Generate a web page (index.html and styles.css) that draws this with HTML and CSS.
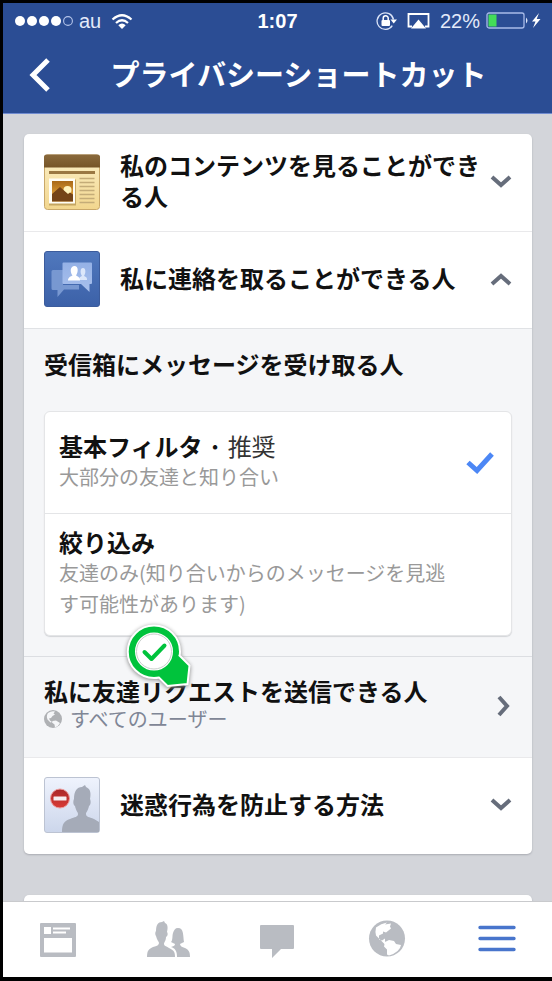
FILE: index.html
```html
<!DOCTYPE html>
<html lang="ja">
<head>
<meta charset="utf-8">
<meta name="viewport" content="width=device-width, initial-scale=1">
<title>プライバシーショートカット</title>
<link rel="stylesheet" href="styles.css">
</head>
<body>
<div class="phone">
  <header class="header">
    <div class="status">
      <div class="status-side">
        <svg width="60" height="12" viewBox="0 0 60 12" aria-hidden="true">
          <g fill="#fff"><circle cx="7" cy="6" r="5"/><circle cx="19" cy="6" r="5"/><circle cx="31" cy="6" r="5"/><circle cx="43" cy="6" r="5"/></g>
          <circle cx="55" cy="6" r="4.4" fill="none" stroke="#b4c4ea" stroke-width="1.1"/>
        </svg>
        <span>au</span>
        <svg class="wifi" width="22" height="17" viewBox="0 0 22 17" fill="none" stroke="#fff" stroke-width="2.2" aria-hidden="true">
          <path d="M1.5 6.5Q11-2 20.500 6.500"/><path d="M5 10Q11 4.500 17 10"/><path d="M11 16L7.300 12.200Q11 9 14.700 12.200Z" fill="#fff" stroke="none"/>
        </svg>
      </div>
      <time class="clock">1:07</time>
      <div class="status-side status-right">
        <svg class="lock" width="21" height="20" viewBox="0 0 21 20" aria-hidden="true">
          <path d="M16.300 14.700A8.300 8.300 0 1 1 17.500 8.500" fill="none" stroke="#dbe4f8" stroke-width="1.300"/>
          <path d="M14.500 8.500h6.500l-3.300 4z" fill="#fff"/>
          <rect x="5.500" y="9" width="8.500" height="6" rx="1" fill="#fff"/>
          <path d="M7.200 9V7.200a2.500 2.500 0 0 1 5 0V9" fill="none" stroke="#fff" stroke-width="1.500"/>
        </svg>
        <svg class="airplay" width="23" height="18" viewBox="0 0 23 18" aria-hidden="true">
          <path d="M5 14.500H1.500V2h20v12.500H18" fill="none" stroke="#fff" stroke-width="1.800"/><path d="M11.500 7.500L19 16.500H4Z" fill="#fff"/>
        </svg>
        <span>22%</span>
        <svg class="battery" width="56" height="18" viewBox="0 0 56 18" aria-hidden="true">
          <rect x="1" y="1" width="37" height="15" rx="2" fill="none" stroke="#a9bbe8" stroke-width="1.300"/>
          <rect x="2.500" y="2.500" width="8" height="12" fill="#43dc58"/>
          <path d="M40 5.500q3 3 0 6z" fill="#dbe4f8"/>
          <path d="M53 1l-7 8.500h3.500L47 16l7.500-9h-3.800z" fill="#fff"/>
        </svg>
      </div>
    </div>
    <div class="titlebar">
      <button class="back" type="button" aria-label="戻る">
        <svg width="24" height="36" viewBox="0 0 24 36"><path d="M21 3L6 18l15 15" fill="none" stroke="#fff" stroke-width="5"/></svg>
      </button>
      <h1>プライバシーショートカット</h1>
    </div>
  </header>

  <main class="content">
    <section class="card">
      <button class="row" type="button" aria-expanded="false">
        <svg class="tile" viewBox="0 0 56 56" aria-hidden="true">
          <defs>
            <linearGradient id="paper" x2="0" y2="1"><stop stop-color="#fbefc6"/><stop offset="1" stop-color="#f2d68e"/></linearGradient>
            <linearGradient id="bar" x2="0" y2="1"><stop stop-color="#8a6a3d"/><stop offset="1" stop-color="#765427"/></linearGradient>
            <linearGradient id="sky" x2="0" y2="1"><stop stop-color="#a96918"/><stop offset="1" stop-color="#f5b645"/></linearGradient>
          </defs>
          <rect x=".5" y="1" width="55" height="54.500" rx="3" fill="url(#paper)" stroke="#c9a86a"/>
          <path d="M0 13.500V3q0-2.500 2.500-2.500h51Q56 .5 56 3v10.500z" fill="url(#bar)"/>
          <path d="M5 18.500h46" stroke="#9a7843" stroke-width="3"/>
          <rect x="5" y="25.500" width="27" height="26" fill="#c5a661"/>
          <rect x="5" y="24.500" width="26" height="25" fill="#fffdf5"/>
          <rect x="8" y="27" width="21" height="20.500" fill="url(#sky)"/>
          <circle cx="23.500" cy="36" r="4" fill="#fff3bd"/>
          <path d="M8 40l8-7 8 7 2-1.500 3 2v7H8z" fill="#754418"/>
          <path d="M35.500 24.500h15M35.500 28.500h15M35.500 32.500h15M35.500 36.500h15M35.500 40.500h15M35.500 44.500h15M35.500 48.500h15" stroke="#c4ac78" stroke-width="1.500"/>
        </svg>
        <span class="row-text">私のコンテンツを見ることができる人</span>
        <svg class="chevron" viewBox="0 0 22 22" aria-hidden="true"><path d="M2 6l9 8 9-8"/></svg>
      </button>

      <button class="row" type="button" aria-expanded="true">
        <svg class="tile" viewBox="0 0 56 56" aria-hidden="true">
          <defs>
            <linearGradient id="blue" x2="0" y2="1"><stop stop-color="#5078bd"/><stop offset="1" stop-color="#3c61a8"/></linearGradient>
            <linearGradient id="bubble" x2="0" y2="1"><stop stop-color="#94b1e6"/><stop offset="1" stop-color="#a9c0ec"/></linearGradient>
          </defs>
          <rect x=".5" y=".5" width="55" height="55" rx="2.500" fill="url(#blue)" stroke="#3c5c9c"/>
          <path d="M9 19h10v15h16v4.500H20L13.500 46v-7H9q-1.500 0-1.500-1.500v-17Q7.500 19 9 19z" fill="#7898d1"/>
          <path d="M19.500 11.500H47q1 0 1 1V32q0 1-1 1h-1.500v8L37 33H19.500q-1 0-1-1V12.500q0-1 1-1z" fill="url(#bubble)"/>
          <path d="M35 29c0-3 1-3 3-4-2-3-2-8 1-8s3 5 1 8c2 1 3 1 3 4z" fill="#dce7fa"/>
          <path d="M24 29.500c0-3.500 3-4 4.500-5-3-4-2-9.500 2-9.500s4 6 1.500 9.500c1.500 1 4 1.500 4 5z" fill="#fff"/>
        </svg>
        <span class="row-text">私に連絡を取ることができる人</span>
        <svg class="chevron" viewBox="0 0 22 22" aria-hidden="true"><path d="M2 16l9-8 9 8"/></svg>
      </button>

      <fieldset class="panel">
        <legend>受信箱にメッセージを受け取る人</legend>
        <div class="options">
          <label class="option">
            <span class="option-text">
              <span class="option-title">基本フィルタ · <span class="hint">推奨</span></span>
              <span class="note">大部分の友達と知り合い</span>
            </span>
            <input type="radio" name="filter" checked>
            <svg class="check" viewBox="0 0 28 22" aria-hidden="true"><path d="M2 10.500l9 8L26 2"/></svg>
          </label>
          <label class="option">
            <span class="option-text">
              <span class="option-title">絞り込み</span>
              <span class="note">友達のみ(知り合いからのメッセージを見逃す可能性があります)</span>
            </span>
            <input type="radio" name="filter">
            <svg class="check" viewBox="0 0 28 22" aria-hidden="true"><path d="M2 10.500l9 8L26 2"/></svg>
          </label>
        </div>
      </fieldset>

      <button class="row request" type="button">
        <span class="request-text">
          <span class="request-title">私に友達リクエストを送信できる人</span>
          <span class="audience">
            <svg width="18" height="18" viewBox="0 0 36 36" aria-hidden="true">
              <circle cx="18" cy="18" r="18" fill="#afb1b4"/>
              <path d="M8 6q7-5 14-3l-3 4 3 2-5 3-3 4-4 1 2 4 4 3-3 1-6-6q-3-7 1-13z" fill="#f5f6f8"/>
              <path d="M17 22l7-1 8 5q-3 7-10 9l-1-6-5-4z" fill="#f5f6f8"/>
            </svg>
            すべてのユーザー
          </span>
        </span>
        <svg class="chevron" viewBox="0 0 22 22" aria-hidden="true"><path d="M9 2l8 9-8 9"/></svg>
        <svg class="marker" viewBox="0 0 68 68" aria-hidden="true">
          <path d="M30 3.500a26 26 0 0 1 26 26q0 3-.5 4l10 10-2 18.500-20 2-8.500-8.500q-2 .5-5 .5a26.200 26.200 0 0 1 0-52.500z" fill="#00c33c" stroke="#fff" stroke-width="2"/>
          <circle cx="30" cy="29.500" r="18" fill="#fff" stroke="#fff" stroke-width="2"/>
          <circle cx="30" cy="29.500" r="17.500" fill="#fff" stroke="#c9cfcc"/>
          <path d="M20.500 30l7 7 13-13.500" fill="none" stroke="#00c33c" stroke-width="4" stroke-linecap="round" stroke-linejoin="round"/>
        </svg>
      </button>

      <button class="row" type="button" aria-expanded="false">
        <svg class="tile" viewBox="0 0 56 56" aria-hidden="true">
          <defs>
            <linearGradient id="pale" x2="0" y2="1"><stop stop-color="#eff3fd"/><stop offset="1" stop-color="#ccd6eb"/></linearGradient>
            <linearGradient id="red" x2="0" y2="1"><stop stop-color="#a92828"/><stop offset="1" stop-color="#d93b36"/></linearGradient>
          </defs>
          <rect x=".5" y=".5" width="55" height="55" rx="2.500" fill="url(#pale)" stroke="#bcc3d2"/>
          <path d="M18 55c0-8 2-11 8-13 5-2 8-2 8-5 0-2-2-3-3-8-2-1-2-5-1-7 0-8 3-12 8-12l3-2 1 2c5 2 5 7 4 12 1 2 1 6-1 7-1 5-3 6-3 8 0 3 3 3 8 5l5 3v10z" fill="#a5abb8"/>
          <circle cx="16" cy="21.500" r="9.500" fill="url(#red)" stroke="#ec9c9c"/>
          <rect x="9.500" y="19.500" width="13" height="4" rx=".5" fill="#f5eef0"/>
        </svg>
        <span class="row-text">迷惑行為を防止する方法</span>
        <svg class="chevron" viewBox="0 0 22 22" aria-hidden="true"><path d="M2 6l9 8 9-8"/></svg>
      </button>
    </section>
    <section class="card next"></section>
  </main>

  <nav class="tabs">
    <a href="#feed" aria-label="ニュースフィード">
      <svg viewBox="0 0 44 44"><path fill-rule="evenodd" d="M5 5h34q1 0 1 1v32q0 1-1 1H5q-1 0-1-1V6q0-1 1-1zM8 9v7h7V9zM17 9.500v2h17v-2zM17 13.500v2h13v-2zM8 20v14.500h28V20z"/></svg>
    </a>
    <a href="#friends" aria-label="友達">
      <svg viewBox="0 0 44 44"><path d="M1 39c0-7 2-8 6-10 4-1 6-2 6-4 0-1-2-3-3-7-1-1-1-4 0-5 0-6 2-9 6-9l2-1 1 2c3 1 3 5 2 9 1 1 1 4-1 5 0 4-2 5-2 7 0 2 2 2 5 4 4 2 6 3 6 9z"/><path d="M31 39c0-6-2-9-6-10 2-1 4-1 4-3l-4-2c2-2 1-6 2-9s2-5 5-5c6 0 5 8 6 14l-4 2c0 2 2 3 5 4 4 2 5 4 5 9z"/></svg>
    </a>
    <a href="#messages" aria-label="メッセージ">
      <svg viewBox="0 0 44 44"><path d="M6 7h32q1 0 1 1v22q0 1-1 1H26l-9 9v-9H6q-1 0-1-1V8q0-1 1-1z"/></svg>
    </a>
    <a href="#notifications" aria-label="お知らせ">
      <svg viewBox="0 0 44 44"><circle cx="22" cy="20.500" r="18"/><path fill="#fff" d="M11 9.500q5-4 11-5l-2 2 6-1-1 3 1 2-5 4-3-1 0 2-4 2 0 4 3 1 3-2 0 3 2 2-2 1-5-5-4-4q-1-4 0-8z"/><path fill="#fff" d="M20 24l4-2 5 1 2 3 5 1q-1 7-12 10.500l-2-1 0-5-3-3z"/></svg>
    </a>
    <a class="active" href="#more" aria-label="その他" aria-current="page">
      <svg viewBox="0 0 44 44"><path d="M5 9.500h34M5 20.500h34M5 31.500h34" stroke="#4875cc" stroke-width="3.400" stroke-linecap="round"/></svg>
    </a>
  </nav>
</div>
</body>
</html>
```
FILE: styles.css
```css
* { box-sizing: border-box; }

body {
  margin: 0;
  background: #000;
  color: #111;
  font-family: "Noto Sans CJK JP", sans-serif;
  font-size: 24px;
}

button {
  margin: 0;
  border: 0;
  background: none;
  color: inherit;
  font: inherit;
  text-align: left;
}

svg { display: block; flex: none; }

.phone {
  display: flex;
  flex-direction: column;
  height: 100vh;
  padding: 3px 0 4px 3px;
}

/* Header */
.header {
  flex: none;
  background: #2b4d94;
  border-bottom: 1px solid #6f8bd0;
  color: #fff;
}

.status {
  display: grid;
  grid-template-columns: 1fr auto 1fr;
  align-items: center;
  height: 36px;
  padding: 0 10px;
  font: 20px/24px "Liberation Sans", sans-serif;
  color: #e3eafa;
}

.status-side { display: flex; align-items: center; gap: 6px; }
.status-side .wifi { margin-left: 4px; }
.status-right { justify-content: flex-end; }
.status-right .airplay { margin: 0 4px; }
.clock { color: #fff; font-weight: bold; }

.titlebar {
  display: grid;
  grid-template-columns: 72px 1fr 30px;
  align-items: center;
  height: 74px;
  padding-bottom: 2px;
}

.back { padding: 0 24px; cursor: pointer; }

h1 {
  margin: 0;
  padding-bottom: 4px;
  font-size: 29px;
  line-height: 40px;
  font-weight: 700;
  text-align: center;
  white-space: nowrap;
}

/* Cards */
.content {
  flex: 1;
  min-height: 0;
  overflow: hidden;
  padding: 20px 20px 0 21px;
  background: #d3d5da;
}

.card {
  margin-bottom: 41px;
  border-radius: 5px;
  background: #fff;
  box-shadow: 0 1px 2px #a9abb2;
}

.next { min-height: 97px; }

.row {
  position: relative;
  display: flex;
  align-items: center;
  width: 100%;
  min-height: 97px;
  padding: 13px 20px 15px;
  font-weight: 700;
  line-height: 31px;
  cursor: pointer;
}

.row + .row { border-top: 1px solid #e9e9eb; }

.tile { width: 56px; height: 56px; margin-right: 20px; }
.row-text { flex: 1; padding-bottom: 4px; }

.chevron {
  width: 22px;
  height: 22px;
  fill: none;
  stroke: #666d7b;
  stroke-width: 4;
}

.panel {
  min-width: 0;
  margin: 0;
  padding: 19px 20px 20px;
  border: 0;
  border-top: 1px solid #e0e2e5;
  background: #f5f6f8;
}

.panel legend {
  float: left;
  width: 100%;
  margin-bottom: 31px;
  padding: 0;
  font-weight: 700;
  line-height: 32px;
}

.options {
  clear: both;
  border: 1px solid #e4e5e7;
  border-radius: 6px;
  background: #fff;
  box-shadow: 0 1px 1px #d3d5d8;
}

.option {
  display: flex;
  align-items: center;
  min-height: 101px;
  padding: 12px 17px 12px 14px;
  line-height: 31px;
  cursor: pointer;
}

.option + .option { border-top: 1px solid #e4e5e7; }
.option-text { flex: 1; padding-bottom: 4px; }
.option-title { display: block; font-weight: 700; }
.hint { font-weight: 400; color: #333; }
.note { display: block; padding-right: 10px; color: #999; font-size: 20px; }

.option input {
  appearance: none;
  width: 0;
  height: 0;
  margin: 0;
}

.check {
  visibility: hidden;
  width: 28px;
  height: 22px;
  fill: none;
  stroke: #4c87f5;
  stroke-width: 5;
}

.option input:checked + .check { visibility: visible; }

.request {
  min-height: 101px;
  border-top: 1px solid #dcdee2;
  background: #f5f6f8;
  line-height: 28px;
}

.request-text { flex: 1; padding-bottom: 2px; }
.request-title { display: block; }

.audience {
  display: flex;
  align-items: center;
  gap: 8px;
  color: #7f8696;
  font-size: 20px;
  font-weight: 400;
}

.marker {
  position: absolute;
  top: -35px;
  left: 100px;
  width: 68px;
  height: 68px;
  filter: drop-shadow(0 1px 2px #888);
}

/* Bottom tabs */
.tabs {
  flex: none;
  display: flex;
  height: 76px;
  border-top: 1px solid #c9cacd;
  background: #fff;
}

.tabs a {
  flex: 1;
  display: flex;
  align-items: center;
  justify-content: center;
}

.tabs svg { width: 44px; height: 44px; fill: #b9bcc2; }
```
